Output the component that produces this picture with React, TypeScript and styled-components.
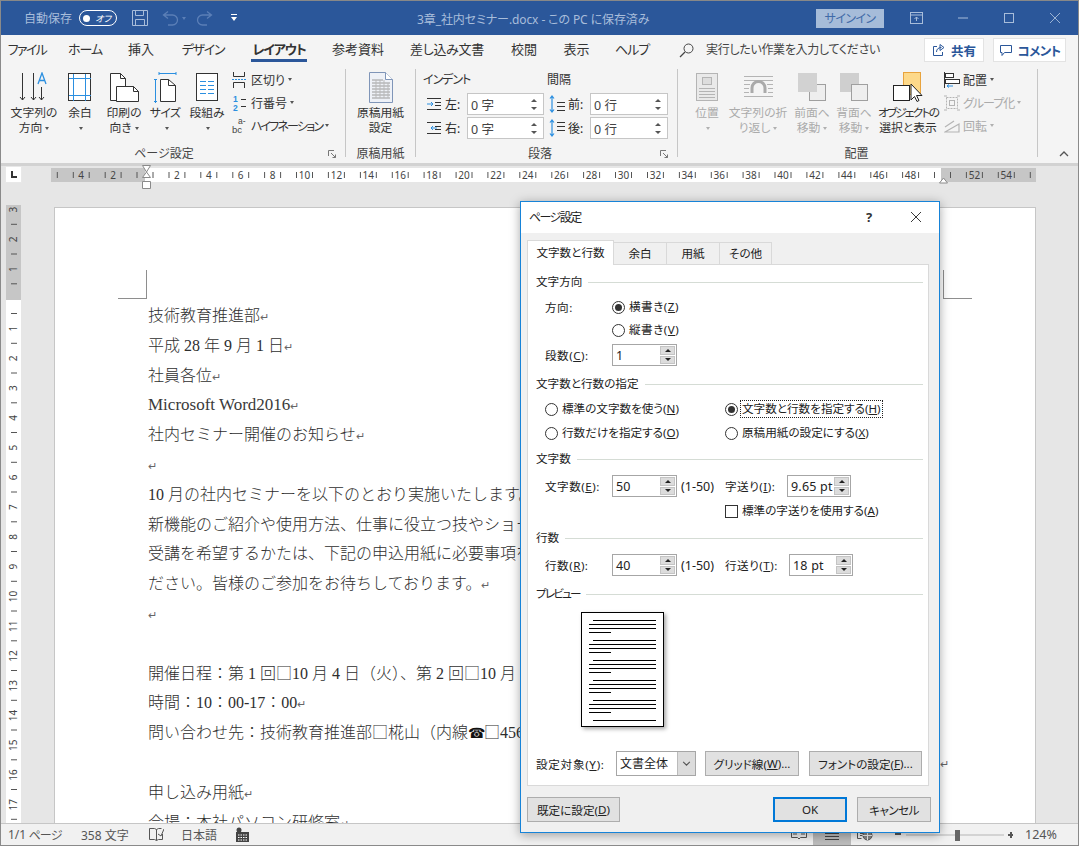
import React from 'react';
import styled, { createGlobalStyle } from 'styled-components';

const Global = createGlobalStyle`
  html, body { margin: 0; padding: 0; background: #e6e6e6; }
  * { box-sizing: border-box; }
  body { font-family: "Noto Sans", "Noto Sans CJK JP", sans-serif; font-size: 12px; color: #262626; font-feature-settings: "palt"; }
  u { text-underline-offset: 1px; }
`;

const Root = styled.div`
  position: relative; width: 1079px; height: 846px; overflow: hidden; display: flex; flex-direction: column;
  border: 1px solid #8a8a8a; border-top-color: #888; background: #e6e6e6;
`;
const Tight = styled.span<{ $ls: number }>` letter-spacing: ${p => p.$ls}px; `;

/* ---------- title bar ---------- */
const TitleBar = styled.div`
  height: 34px; flex: none; background: #2b579a; color: #a8bdda; display: flex; align-items: center; font-size: 12px;
`;
const AutoSave = styled.span` margin-left: 23px; width: 55px; `;
const Toggle = styled.span`
  width: 38px; height: 16px; border: 1.5px solid #fff; border-radius: 8px; display: flex; align-items: center; justify-content: space-between; padding: 0 5px 0 3px;
  color: #fff; font-size: 9px; font-style: italic;
  i { width: 7px; height: 7px; border-radius: 50%; background: #fff; }
`;
const QatIcon = styled.span<{ $ml: number }>` display: flex; align-items: center; margin-left: ${p => p.$ml}px; `;
const QatCaret = styled.i`
  width: 0; height: 0; border: 2.5px solid transparent; border-top: 3px solid #5b7fb7; border-bottom: 0; margin-left: 3px;
`;
const DocTitle = styled.span` position: absolute; left: 416px; top: 9px; font-size: 12px; white-space: nowrap; letter-spacing: -.1px; `;
const TitleRight = styled.div` margin-left: auto; display: flex; align-items: center; height: 100%; `;
const SignIn = styled.span`
  width: 68px; height: 19px; background: #a6bcd9; color: #3f6aa8; display: flex; align-items: center; justify-content: center; font-size: 12px; margin-right: 26px; letter-spacing: -.6px;
`;
const WinBtn = styled.span<{ $w: number; $mr?: number }>` width: ${p => p.$w}px; display: flex; justify-content: center; margin-right: ${p => p.$mr ?? 0}px; `;

/* ---------- ribbon tabs ---------- */
const TabRow = styled.div`
  height: 30px; flex: none; background: #f4f4f4; display: flex; align-items: flex-start; font-size: 13px; color: #333;
`;
const RibbonTab = styled.span<{ $w: number }>`
  width: ${p => p.$w}px; display: flex; justify-content: center; padding-top: 5px; flex: none;
`;
const TabText = styled.span<{ $active?: boolean; $ls: number }>`
  line-height: 19px; white-space: nowrap; padding: 0 1px;
  letter-spacing: ${p => p.$ls}px;
  font-weight: ${p => (p.$active ? 700 : 400)};
  border-bottom: 3px solid ${p => (p.$active ? '#2b579a' : 'transparent')};
`;
const SearchBox = styled.span` display: flex; align-items: center; gap: 12px; margin: 5px 0 0 15px; line-height: 20px; color: #444; white-space: nowrap; width: 245px; font-size: 12px; letter-spacing: -.3px; `;
const HeadBtn = styled.span<{ $w: number }>`
  width: ${p => p.$w}px; height: 24px; margin: 3px 0 0 0; background: #fff; border: 1px solid #e3e3e3; color: #2b579a; font-weight: 700; display: flex; align-items: center; justify-content: center; gap: 5px; flex: none; font-size: 12.5px;
`;
const HeadGap = styled.span` width: 9px; flex: none; `;

/* ---------- ribbon ---------- */
const Ribbon = styled.div` height: 98px; flex: none; background: #f4f4f4; display: flex; font-size: 12px; `;
const Group = styled.div<{ $w: number; $pl?: number }>`
  width: ${p => p.$w}px; flex: none; display: flex; flex-direction: column; padding-left: ${p => p.$pl ?? 0}px;
`;
const GroupBody = styled.div` flex: 1; display: flex; padding-top: 5px; min-height: 0; `;
const GroupFoot = styled.div<{ $plain?: boolean }>`
  height: 18px; display: grid; grid-template-columns: ${p => (p.$plain ? '1fr' : '1fr 12px')}; align-items: center; text-align: center; color: #444; line-height: 16px; padding-right: ${p => (p.$plain ? 0 : 5)}px;
`;
const FootLabel = styled.span<{ $pr?: number }>` padding-right: ${p => p.$pr ?? 0}px; white-space: nowrap; `;
const Launcher = styled.span` display: flex; `;
const GroupSep = styled.div` width: 1px; flex: none; background: #c6c6c6; margin: 4px 0 6px; `;
const LargeBtn = styled.div<{ $w: number; $off?: boolean }>`
  width: ${p => p.$w}px; flex: none; display: flex; flex-direction: column; align-items: center; color: ${p => (p.$off ? '#ababab' : '#333')};
`;
const LargeIcon = styled.div` height: 34px; display: flex; align-items: center; justify-content: center; `;
const LargeLabel = styled.div` margin-top: 1px; line-height: 15px; text-align: center; white-space: nowrap; font-size: 11.8px; `;
const Caret = styled.i<{ $off?: boolean }>`
  display: inline-block; width: 0; height: 0; border: 2.5px solid transparent; border-top: 3px solid ${p => (p.$off ? '#b0b0b0' : '#555')}; border-bottom: 0; vertical-align: middle; margin-left: 3px;
`;
const SmallStack = styled.div` display: flex; flex-direction: column; margin-top: -2px; `;
const SmallRow = styled.div<{ $off?: boolean }>`
  height: 23px; display: flex; align-items: center; white-space: nowrap; color: ${p => (p.$off ? '#ababab' : '#333')};
`;
const SmallIcon = styled.span` width: 19px; display: flex; `;
const ParaCol = styled.div<{ $w: number }>` width: ${p => p.$w}px; flex: none; display: flex; flex-direction: column; `;
const ParaHead = styled.div` height: 20px; line-height: 20px; color: #333; `;
const ParaRow = styled.div<{ $ml: number; $mt: number }>` display: flex; align-items: center; height: 22px; margin-top: ${p => p.$mt}px; padding-left: ${p => p.$ml}px; `;
const ParaIcon = styled.span<{ $w: number }>` width: ${p => p.$w}px; display: flex; flex: none; `;
const ParaLabel = styled.span` width: 22px; flex: none; `;
const RibbonInput = styled.div<{ $w: number }>`
  width: ${p => p.$w}px; height: 22px; border: 1px solid #c6c6c6; background: #fff; display: flex; align-items: center; justify-content: space-between; padding: 0 6px 0 3px; color: #444; font-size: 12.5px;
`;
const RibbonSpin = styled.span`
  display: flex; flex-direction: column; gap: 5px;
  i { width: 0; height: 0; border: 3px solid transparent; }
  i:first-child { border-bottom: 3px solid #555; border-top: 0; }
  i:last-child { border-top: 3px solid #555; border-bottom: 0; }
`;
const CollapseCell = styled.div` flex: 1; display: flex; align-items: flex-end; justify-content: flex-end; padding: 0 9px 6px 0; `;

/* ---------- ruler ---------- */
const RulerRow = styled.div`
  height: 42px; flex: none; background: #e6e6e6; border-top: 3px solid #d2d2d2; display: flex; align-items: flex-start; padding-left: 4px;
`;
const LButton = styled.div`
  width: 17px; height: 17px; background: #fff; border: 1px solid #e8e8e8; display: flex; align-items: center; justify-content: center; flex: none;
`;
const HRuler = styled.svg` margin: -2px 0 0 29px; flex: none; display: block; `;

/* ---------- document ---------- */
const Work = styled.div` flex: 1; min-height: 0; display: flex; `;
const VRulerCol = styled.div` width: 53px; flex: none; padding-left: 5px; `;
const VRuler = styled.svg` display: block; `;
const Page = styled.div`
  position: relative; width: 982px; margin-top: 2px; flex: none; background: #fff; border: 1px solid #c6c6c6; border-bottom: 0; overflow: hidden;
  padding: 93px 0 0 93px; font-family: "Liberation Serif", "Noto Sans CJK JP", serif; font-size: 16px; color: #2e2e2e; font-weight: 300; font-feature-settings: normal;
`;
const CropMark = styled.div<{ $side: 'l' | 'r' }>`
  position: absolute; top: 62px; width: 29px; height: 29px; border-bottom: 1px solid #8e8e8e;
  ${p => (p.$side === 'l' ? 'left: 63px; border-right: 1px solid #8e8e8e;' : 'left: 888px; border-left: 1px solid #8e8e8e;')}
`;
const DocLine = styled.div<{ $indent?: number }>`
  height: 29.8px; line-height: 29.8px; white-space: nowrap; padding-left: ${p => p.$indent ?? 0}px;
`;
const Ret = styled.span` font-family: "DejaVu Sans", sans-serif; font-size: 11px; color: #666; `;
const Tel = styled.span` display: inline-block; width: 16px; text-align: center; font-family: "DejaVu Sans", sans-serif; font-size: 14px; line-height: 16px; color: #111; `;
const Sq = styled.span` display: inline-block; width: 16px; text-align: center; font-family: "Noto Sans CJK JP", sans-serif; line-height: 16px; `;
const LatinRun = styled.span` font-size: 17px; color: #3a3a3a; `;

/* ---------- status bar ---------- */
const StatusBar = styled.div`
  height: 22px; flex: none; background: #f1f1f1; border-top: 1px solid #c6c6c6; display: flex; align-items: center; color: #555; font-size: 12px; position: relative; z-index: 1;
`;
const StatusCell = styled.span<{ $w: number }>` width: ${p => p.$w}px; flex: none; display: flex; align-items: center; white-space: nowrap; `;
const ViewBtn = styled.span<{ $w: number; $on?: boolean }>`
  width: ${p => p.$w}px; height: 100%; flex: none; display: flex; align-items: center; justify-content: center; background: ${p => (p.$on ? '#bcbcbc' : 'transparent')};
`;
const Zoom = styled.span` margin-left: 17px; display: flex; `;
const Percent = styled.span` margin-left: 12px; color: #555; font-size: 12.5px; `;

/* ---------- dialog ---------- */
const Dialog = styled.div`
  position: absolute; left: 519px; top: 200px; width: 420px; height: 632px; background: #f0f0f0; border: 1px solid #1683d8; box-shadow: 0 2px 10px rgba(0,0,0,.35); display: flex; flex-direction: column; z-index: 5; color: #222;
`;
const DlgTitle = styled.div` height: 30px; margin-bottom: 1px; flex: none; background: #fff; display: flex; align-items: center; padding-left: 8px; font-size: 12px; box-shadow: 0 1px 0 #fff; `;
const DlgHelp = styled.span` margin-left: auto; font-weight: 700; font-size: 13px; width: 45px; color: #333; `;
const DlgClose = styled.span` display: flex; margin-right: 18px; `;
const DlgBody = styled.div` flex: 1; padding: 7px 0 0 6px; display: flex; flex-direction: column; font-size: 11.6px; `;
const TabStrip = styled.div` height: 25px; flex: none; display: flex; align-items: flex-end; position: relative; z-index: 1; margin-bottom: -1px; `;
const DlgTab = styled.div<{ $w: number; $active?: boolean }>`
  width: ${p => p.$w}px; height: ${p => (p.$active ? 25 : 23)}px; display: flex; align-items: center; justify-content: center; flex: none; padding-bottom: 2px;
  background: ${p => (p.$active ? '#fff' : '#f0f0f0')}; border: 1px solid #d9d9d9; border-bottom: ${p => (p.$active ? 0 : 1)}px solid #d9d9d9; margin-left: ${p => (p.$active ? 0 : -1)}px;
`;
const Panel = styled.div`
  width: 402px; height: 522px; flex: none; background: #fff; border: 1px solid #d9d9d9; padding: 9px 5px 0 8px; display: flex; flex-direction: column;
`;
const SectionHead = styled.div<{ $mt?: number }>`
  height: 16px; line-height: 16px; display: flex; align-items: center; gap: 6px; white-space: nowrap; margin-top: ${p => p.$mt ?? 0}px;
  &::after { content: ''; flex: 1; height: 1px; background: #d5dcd5; }
`;
const FieldRow = styled.div<{ $mt: number }>` display: flex; align-items: center; min-height: 20px; padding-left: 9px; margin-top: ${p => p.$mt}px; white-space: nowrap; `;
const FieldLabel = styled.span<{ $w: number }>` width: ${p => p.$w}px; flex: none; letter-spacing: .5px; `;
const Radio = styled.span<{ $on?: boolean }>`
  width: 13px; height: 13px; border-radius: 50%; border: 1px solid #333; background: #fff; flex: none; display: flex; align-items: center; justify-content: center;
  &::after { content: ''; width: 7px; height: 7px; border-radius: 50%; background: ${p => (p.$on ? '#333' : 'transparent')}; }
`;
const CheckBox = styled.span` width: 13px; height: 13px; border: 1px solid #333; background: #fff; flex: none; `;
const Opt = styled.span<{ $w?: number }>`
  display: flex; align-items: center; flex: none; ${p => (p.$w ? `width: ${p.$w}px;` : '')}
`;
const OptText = styled.span<{ $focus?: boolean }>`
  margin-left: 3px; padding: 0 1px; line-height: 16px; outline: ${p => (p.$focus ? '1px dotted #222' : 'none')};
`;
const Spin = styled.div<{ $w: number }>`
  width: ${p => p.$w}px; height: 22px; flex: none; border: 1px solid #a6a6a6; background: #fff; display: flex; align-items: center; justify-content: space-between; padding: 1px 1px 1px 3px; font-size: 12.5px; letter-spacing: .2px;
`;
const SpinBtns = styled.span`
  width: 15px; height: 100%; display: flex; flex-direction: column; gap: 1px; flex: none;
  b { flex: 1; background: #dcdcdc; border: 1px solid #c4c4c4; display: flex; align-items: center; justify-content: center; }
  i { width: 0; height: 0; border: 3px solid transparent; }
  b:first-child i { border-bottom: 3px solid #222; border-top: 0; }
  b:last-child i { border-top: 3px solid #222; border-bottom: 0; }
`;
const Range = styled.span` width: 44px; flex: none; margin-left: 4px; font-size: 12.5px; `;
const PreviewPage = styled.div`
  width: 83px; height: 115px; margin: 10px 0 0 45px; border: 1px solid #000; background: #fff; box-shadow: 2px 2px 4px rgba(0,0,0,.35); flex: none;
  svg { display: block; }
`;
const BottomRow = styled.div` margin-top: 24px; display: flex; align-items: center; `;
const TargetLabel = styled.span` width: 80px; flex: none; white-space: nowrap; letter-spacing: .7px; `;
const SelectBox = styled.div`
  width: 80px; height: 25px; border: 1px solid #a6a6a6; background: #fff; display: flex; align-items: stretch; padding-left: 3px; flex: none; font-size: 12px;
  span { flex: 1; line-height: 23px; }
  i { width: 18px; background: #dcdcdc; border-left: 1px solid #bbb; display: flex; align-items: center; justify-content: center; }
`;
const DlgButton = styled.div<{ $w: number; $ml?: number; $def?: boolean }>`
  width: ${p => p.$w}px; height: 25px; flex: none; margin-left: ${p => p.$ml ?? 0}px; background: #e1e1e1; border: ${p => (p.$def ? '2px solid #0078d7' : '1px solid #adadad')}; display: flex; align-items: center; justify-content: center; white-space: nowrap;
`;
const DlgFoot = styled.div` display: flex; margin-top: 11px; `;

/* ---------- icons ---------- */
const K = '#333';
const B = '#2b8fe0';
const G = '#b4b4b4';
const TextDirIcon = () => (
  <svg width="30" height="30" viewBox="0 0 30 30" fill="none" stroke={K}>
    <path d="M3.5 1v27M1 25l2.500 3 2.500-3M14.500 1v27M12 25l2.500 3 2.500-3M22.500 15v13M20 25l2.500 3 2.500-3" />
    <path d="M19 12l4-11 4 11M20.500 8.500h5" stroke={B} strokeWidth="1.3" />
  </svg>
);
const MarginIcon = () => (
  <svg width="24" height="29" viewBox="0 0 24 29" fill="none">
    <rect x=".5" y=".5" width="22" height="27" fill="#fff" stroke={K} />
    <path d="M5.500 1v27M17.500 1v27M1 5.500h22M1 22.500h22" stroke={B} />
  </svg>
);
const OrientIcon = () => (
  <svg width="29" height="29" viewBox="0 0 29 29" fill="#fff" stroke={K}>
    <path d="M.5.500h10l5 5v22h-15z" />
    <path d="M10.500.500v5h5" fill="none" />
    <path d="M6.500 13.500h17l5 5v10h-22z" />
    <path d="M23.500 13.500v5h5" fill="none" />
  </svg>
);
const SizeIcon = () => (
  <svg width="23" height="31" viewBox="0 0 23 31" fill="none">
    <path d="M1.500 7v24M0 7.500h3M0 29.500h3M5 1.500h17M5 0v3M22 0v3" stroke={B} />
    <path d="M6.500 7.500h8l7 6v16h-15z" fill="#fff" stroke={K} />
    <path d="M14.500 7.500v6h7" stroke={K} />
  </svg>
);
const ColumnsIcon = () => (
  <svg width="23" height="29" viewBox="0 0 23 29" fill="none">
    <rect x=".5" y=".5" width="21" height="27" fill="#fff" stroke={K} />
    <path d="M4 8.500h6M12 8.500h6M4 12.500h6M12 12.500h6M4 16.500h6M12 16.500h6M4 20.500h6M12 20.500h6" stroke={B} />
  </svg>
);
const BreakIcon = () => (
  <svg width="14" height="16" viewBox="0 0 14 16" fill="none" stroke={K}>
    <path d="M1.500 0v4.500h11V0M1.500 16v-5.500h11V16" />
    <path d="M0 7.500h14" stroke={B} strokeDasharray="2 1" />
  </svg>
);
const LineNoIcon = () => (
  <svg width="14" height="16" viewBox="0 0 14 16" fill="none">
    <path d="M9 4.500h5M9 11.500h5" stroke={K} />
    <text x="1" y="7" fontSize="8.500" fontWeight="700" fill={B} stroke="none" fontFamily="Liberation Sans">1</text>
    <text x="1" y="15.500" fontSize="8.500" fontWeight="700" fill={B} stroke="none" fontFamily="Liberation Sans">2</text>
  </svg>
);
const HyphenIcon = () => (
  <svg width="16" height="17" viewBox="0 0 16 17">
    <text x="6" y="7" fontSize="8.500" fill="#444" fontFamily="Liberation Sans">a-</text>
    <text x="0" y="16" fontSize="9.500" fill="#444" fontFamily="Liberation Sans">bc</text>
  </svg>
);
const GenkoIcon = () => (
  <svg width="24" height="31" viewBox="0 0 24 31" fill="none">
    <path d="M.5.500h16l7 7v23H.5z" fill="#eef1f7" stroke="#7f95b8" />
    <path d="M16.500.500v7h7" fill="#fff" stroke="#7f95b8" />
    <path d="M3 8h11M3 11h18M3 14h18M3 17h18M3 20h18M3 23h18M3 26h18" stroke="#9a9a9a" />
    <path d="M7 8v18M11 8v18M15 8v18M19 11v15" stroke="#b9b9b9" />
  </svg>
);
const IndentIcon = ({ dir }: { dir: 'l' | 'r' }) => (
  <svg width="14" height="14" viewBox="0 0 14 14" fill="none" stroke={K}>
    <path d="M0 1.500h14M0 12.500h14M8 5.500h6M8 8.500h6" />
    <path d={dir === 'l' ? 'M0 7h6M4 5l2 2-2 2' : 'M1 7h6M3 5L1 7l2 2'} stroke={B} transform={dir === 'r' ? 'translate(3 0)' : ''} />
  </svg>
);
const SpaceIcon = ({ pos }: { pos: 'b' | 'a' }) => (
  <svg width="16" height="18" viewBox="0 0 16 18" fill="none">
    <path d="M3 1v16M1 3.500L3 1l2 2.500M1 14.500L3 17l2-2.500" stroke={B} strokeWidth="1.200" />
    <path d={pos === 'b' ? 'M8 7.500h8M8 11.500h8M8 15.500h8' : 'M8 3.500h8M8 7.500h8M8 11.500h8'} stroke={K} />
  </svg>
);
const PositionIcon = () => (
  <svg width="22" height="28" viewBox="0 0 22 28" fill="#e9e9e9" stroke={G}>
    <rect x=".5" y=".5" width="21" height="27" />
    <rect x="6.500" y="4.500" width="9" height="7" fill="#ddd" />
    <path d="M3 15.500h16M3 18.500h16M3 21.500h16M3 24.500h16" fill="none" />
  </svg>
);
const WrapIcon = () => (
  <svg width="29" height="22" viewBox="0 0 29 22" fill="none" stroke={G}>
    <path d="M0 .5h29M0 4.500h29M0 8.500h6M23 8.500h6M0 12.500h5M24 12.500h5M0 16.500h5M24 16.500h5M0 20.500h29" />
    <path d="M8 17v-5a6.500 6.500 0 0 1 13 0v5" strokeWidth="3" stroke="#aaa" />
  </svg>
);
const FrontIcon = ({ back }: { back?: boolean }) => (
  <svg width="28" height="28" viewBox="0 0 28 28" fill="none">
    {back ? (
      <>
        <rect x="0" y="0" width="19" height="19" fill="#cfcfcf" />
        <rect x="11.500" y="11.500" width="16" height="16" fill="#eee" stroke="#9f9f9f" />
      </>
    ) : (
      <>
        <rect x="11.500" y="11.500" width="16" height="16" fill="#eee" stroke="#9f9f9f" />
        <rect x="0" y="0" width="19" height="19" fill="#d2d2d2" />
      </>
    )}
  </svg>
);
const SelectionIcon = () => (
  <svg width="30" height="30" viewBox="0 0 30 30" fill="none">
    <rect x="10.500" y=".5" width="17" height="22" fill="#fdd98a" stroke="#e8a33d" />
    <rect x=".5" y="13.500" width="16" height="15" fill="#fff" stroke="#222" />
    <path d="M18 12v16l3.500-3.500 2.500 5 2-1-2.500-5H29z" fill="#fff" stroke="#222" />
  </svg>
);
const AlignIcon = () => (
  <svg width="16" height="16" viewBox="0 0 16 16" fill="none">
    <path d="M.5 0v16" stroke={K} />
    <rect x="1.500" y="1.500" width="8" height="4" stroke={K} fill="#fff" />
    <rect x="1.500" y="7.500" width="14" height="4" stroke={K} fill="#fff" />
    <path d="M3 14h6M3 14l2-1.500M3 14l2 1.500" stroke={B} />
  </svg>
);
const GroupIcon = () => (
  <svg width="16" height="16" viewBox="0 0 16 16" fill="none" stroke={G}>
    <rect x="2.500" y="2.500" width="11" height="11" strokeDasharray="2 1" />
    <rect x="5.500" y="5.500" width="5" height="5" />
    <path d="M0 1h3M0 15h3M13 1h3M13 15h3" />
  </svg>
);
const RotateIcon = () => (
  <svg width="16" height="14" viewBox="0 0 16 14" fill="none" stroke={G}>
    <path d="M1 13L15 5v8zM1 8l9-6" strokeWidth="1.200" />
  </svg>
);
const LaunchIcon = () => (
  <svg width="8" height="8" viewBox="0 0 8 8" fill="none" stroke="#777">
    <path d="M.5 6V.5H6M3 3l4.500 4.500M7.500 4.500v3h-3" />
  </svg>
);
const Chevron = ({ up, color = '#333', w = 10, h = 6 }: { up?: boolean; color?: string; w?: number; h?: number }) => (
  <svg width={w} height={h} viewBox="0 0 10 6" fill="none" stroke={color} strokeWidth="1.300">
    <path d={up ? 'M1 5l4-4 4 4' : 'M1 1l4 4 4-4'} />
  </svg>
);

const D = '#a8bdda';
const SaveIcon = () => (
  <svg width="16" height="16" viewBox="0 0 16 16" fill="none" stroke={D}>
    <path d="M.5.500h15v15H.5zM3.500.500v5h8v-5M3.500 15.500v-6h9v6" />
  </svg>
);
const UndoIcon = ({ flip }: { flip?: boolean }) => (
  <svg width="17" height="16" viewBox="0 0 17 16" fill="none" stroke="#5b7fb7" strokeWidth="1.300" style={flip ? { transform: 'scaleX(-1)' } : undefined}>
    <path d="M6 1.500L1.500 5 6 8.500M1.500 5h9a5 5 0 0 1 0 10H6" />
  </svg>
);
const PinIcon = () => (
  <svg width="6" height="8" viewBox="0 0 6 8" fill="#fff"><rect x="0" y="0" width="6" height="1" /><path d="M0 3h6L3 7z" /></svg>
);
const RibbonOptIcon = () => (
  <svg width="13" height="12" viewBox="0 0 13 12" fill="none" stroke={D}><rect x=".5" y=".5" width="12" height="11" /><path d="M.5 3h12M4.500 7l2-2 2 2M6.500 5v4" /></svg>
);
const MinIcon = () => <svg width="10" height="2" viewBox="0 0 10 2"><path d="M0 1h10" stroke={D} /></svg>;
const MaxIcon = () => <svg width="10" height="10" viewBox="0 0 10 10" fill="none"><rect x=".5" y=".5" width="9" height="9" stroke={D} /></svg>;
const CloseIcon = ({ c = D, s = 10 }: { c?: string; s?: number }) => (
  <svg width={s} height={s} viewBox="0 0 10 10" fill="none" stroke={c} strokeWidth=".9"><path d="M0 0l10 10M10 0L0 10" /></svg>
);
const SearchIcon = () => (
  <svg width="15" height="15" viewBox="0 0 15 15" fill="none" stroke="#444"><circle cx="9.500" cy="5.500" r="4.500" /><path d="M6 9l-5 5" strokeWidth="1.300" /></svg>
);
const ShareIcon = () => (
  <svg width="14" height="14" viewBox="0 0 14 14" fill="none" stroke="#2b579a"><path d="M5 3.500H1.500v9h9V9" /><path d="M4.500 9c0-3 2-4.500 5-4.500M8 1.500l4 3-4 3z" /></svg>
);
const CommentIcon = () => (
  <svg width="14" height="13" viewBox="0 0 14 13" fill="none" stroke="#2b579a"><path d="M1.500 1.500h11v7h-7L3 11.500v-3H1.500z" /></svg>
);
const BookIcon = () => (
  <svg width="15" height="15" viewBox="0 0 15 15" fill="none" stroke="#555"><path d="M.5 1.500h5l2 1 0 11-2-1h-5zM7.500 2.500l2-1h3M7.500 13.500l2-1h4V7" /><path d="M9 7l3 2 3-7" /></svg>
);
const MacroIcon = () => (
  <svg width="13" height="15" viewBox="0 0 13 15" fill="#444"><circle cx="3" cy="3" r="2.500" /><rect x="0" y="5" width="13" height="10" /><path d="M2 8h9M2 10.500h9M2 13h9" stroke="#fff" strokeDasharray="1.500 1" /></svg>
);
const ReadIcon = () => (
  <svg width="16" height="11" viewBox="0 0 16 11" fill="none" stroke="#555"><path d="M.5.500h6l1.500 1 1.500-1h6v8h-6L8 10 6.500 8.500h-6zM2 3h4M2 5h4M10 3h4M10 5h4" /></svg>
);
const PrintIcon = () => (
  <svg width="14" height="10" viewBox="0 0 14 10" fill="none" stroke="#444"><path d="M0 .5h14M0 3.500h14M0 6.500h14M0 9.500h14" /></svg>
);
const WebIcon = () => (
  <svg width="16" height="12" viewBox="0 0 16 12" fill="none" stroke="#555"><path d="M.5 1.500h7M.5 1.500v8h4M3 4.500h3M3 6.500h2" /><circle cx="10.500" cy="6.500" r="4.500" fill="#888" stroke="#555" /><path d="M6 6.500h9M10.500 2v9" stroke="#f1f1f1" /></svg>
);
const ZoomBar = () => (
  <svg width="118" height="14" viewBox="0 0 118 14">
    <path d="M0 6h6" stroke="#555" strokeWidth="2" />
    <path d="M11 7h98" stroke="#b5b5b5" />
    <rect x="60" y="2" width="5" height="11" fill="#666" />
    <path d="M113 7h6M116 4v6" stroke="#555" strokeWidth="2" />
  </svg>
);

/* ---------- rulers ---------- */
const RW = 985;
const RX = (n: number) => 94 + 15.95 * n; // ruler-unit to svg x (ruler svg starts at page x 51)
const HNums = [-4, -2, 2, 4, 6, 8, 10, 12, 14, 16, 18, 20, 22, 24, 26, 28, 30, 32, 34, 36, 38, 40, 42, 44, 46, 48, 52, 54];
const HTicks = Array.from({ length: 62 }, (_, i) => i - 6).map(n => RX(n) + 8).filter(x => x > 2 && x < 983);

const HorizontalRuler = () => (
  <HRuler width={RW} height={26} viewBox={`0 0 ${RW} 26`}>
    <rect x="0" y="4" width={RW} height="14" fill="#c6c6c6" />
    <rect x="94" y="4" width="796" height="14" fill="#fff" />
    {HTicks.map(x => <path key={x} d={`M${x.toFixed(1)} 8v6`} stroke="#555" />)}
    {HNums.map(n => (
      <text key={n} x={RX(n)} y="14.500" textAnchor="middle" fontSize="10" fill="#444" fontFamily="Noto Sans">{Math.abs(n)}</text>
    ))}
    <path d="M91.500 1.500h8L95.500 8zM95.500 8l4 5.500h-8zM91.500 17.500h8v7h-8z" fill="#fff" stroke="#8a8a8a" />
    <path d="M888.500 19l4-5 4 5z" fill="#fff" stroke="#8a8a8a" />
  </HRuler>
);

const VY = (n: number) => 94 + 29.75 * n;
const VNums = [-3, -2, -1, 1, 2, 3, 4, 5, 6, 7, 8, 9, 10, 11, 12, 13, 14, 15, 16, 17];
const VTicks = Array.from({ length: 22 }, (_, i) => i - 4).map(n => VY(n) + 14.5).filter(y => y > 2);

const VerticalRuler = () => (
  <VRuler width="15" height="618" viewBox="0 0 15 618">
    <rect width="15" height="618" fill="#fff" />
    <rect width="15" height="95" fill="#c6c6c6" />
    {VTicks.map(y => <path key={y} d={`M5 ${y.toFixed(1)}h6`} stroke="#555" />)}
    {VNums.map(n => (
      <text key={n} x="0" y="0" transform={`translate(11 ${VY(n)}) rotate(-90)`} textAnchor="middle" fontSize="10" fill="#444" fontFamily="Noto Sans">{Math.abs(n)}</text>
    ))}
  </VRuler>
);

/* ---------- data ---------- */
const TABS: [string, number, number][] = [
  ['ファイル', 52, -1.6], ['ホーム', 64, -1], ['挿入', 48, 0], ['デザイン', 76, -1.2], ['レイアウト', 76, -1.2], ['参考資料', 82, 0], ['差し込み文書', 96, -.3], ['校閲', 58, 0], ['表示', 47, 0], ['ヘルプ', 64, -1],
];

const R = () => <Ret>↵</Ret>;

const PreviewLines = () => {
  const paras = [0, 20, 40, 60, 80];
  return (
    <svg width="81" height="113" viewBox="0 0 81 113" stroke="#000">
      {paras.map(y => (
        <g key={y}>
          <path d={`M11 ${7.5 + y}h63`} />
          <path d={`M7 ${11.5 + y}h67`} />
          <path d={`M7 ${15.5 + y}h67`} />
          <path d={`M7 ${19.5 + y}h22`} />
        </g>
      ))}
      <path d="M11 107.500h63" />
    </svg>
  );
};

const SpinField = ({ w, v }: { w: number; v: string }) => (
  <Spin $w={w}>
    <span>{v}</span>
    <SpinBtns><b><i /></b><b><i /></b></SpinBtns>
  </Spin>
);

const RInput = ({ w, v }: { w: number; v: string }) => (
  <RibbonInput $w={w}>
    <span>{v}</span>
    <RibbonSpin><i /><i /></RibbonSpin>
  </RibbonInput>
);

export default function App() {
  return (
    <Root>
      <Global />
      <TitleBar>
        <AutoSave>自動保存</AutoSave>
        <Toggle><i />オフ</Toggle>
        <QatIcon $ml={15}><SaveIcon /></QatIcon>
        <QatIcon $ml={14}><UndoIcon /><QatCaret /></QatIcon>
        <QatIcon $ml={10}><UndoIcon flip /></QatIcon>
        <QatIcon $ml={18}><PinIcon /></QatIcon>
        <DocTitle>3章_社内セミナー.docx - この PC に保存済み</DocTitle>
        <TitleRight>
          <SignIn>サインイン</SignIn>
          <WinBtn $w={13} $mr={17}><RibbonOptIcon /></WinBtn>
          <WinBtn $w={46}><MinIcon /></WinBtn>
          <WinBtn $w={46}><MaxIcon /></WinBtn>
          <WinBtn $w={46}><CloseIcon /></WinBtn>
        </TitleRight>
      </TitleBar>

      <TabRow>
        {TABS.map(([t, w, ls]) => (
          <RibbonTab key={t} $w={w}><TabText $ls={ls} $active={t === 'レイアウト'}>{t}</TabText></RibbonTab>
        ))}
        <SearchBox><SearchIcon />実行したい作業を入力してください</SearchBox>
        <HeadBtn $w={60}><ShareIcon />共有</HeadBtn>
        <HeadGap />
        <HeadBtn $w={73}><CommentIcon /><Tight $ls={-.6}>コメント</Tight></HeadBtn>
      </TabRow>

      <Ribbon>
        <Group $w={344} $pl={7}>
          <GroupBody>
            <LargeBtn $w={52}><LargeIcon><TextDirIcon /></LargeIcon><LargeLabel>文字列の<br />方向<Caret /></LargeLabel></LargeBtn>
            <LargeBtn $w={40}><LargeIcon><MarginIcon /></LargeIcon><LargeLabel>余白<br /><Caret /></LargeLabel></LargeBtn>
            <LargeBtn $w={48}><LargeIcon><OrientIcon /></LargeIcon><LargeLabel>印刷の<br />向き<Caret /></LargeLabel></LargeBtn>
            <LargeBtn $w={34}><LargeIcon><SizeIcon /></LargeIcon><LargeLabel><Tight $ls={-.6}>サイズ</Tight><br /><Caret /></LargeLabel></LargeBtn>
            <LargeBtn $w={50}><LargeIcon><ColumnsIcon /></LargeIcon><LargeLabel>段組み<br /><Caret /></LargeLabel></LargeBtn>
            <SmallStack>
              <SmallRow><SmallIcon><BreakIcon /></SmallIcon>区切り<Caret /></SmallRow>
              <SmallRow><SmallIcon><LineNoIcon /></SmallIcon>行番号<Caret /></SmallRow>
              <SmallRow><SmallIcon><HyphenIcon /></SmallIcon><Tight $ls={-1.8}>ハイフネーション</Tight><Caret /></SmallRow>
            </SmallStack>
          </GroupBody>
          <GroupFoot><FootLabel $pr={8}>ページ設定</FootLabel><Launcher><LaunchIcon /></Launcher></GroupFoot>
        </Group>
        <GroupSep />
        <Group $w={69}>
          <GroupBody>
            <LargeBtn $w={69}><LargeIcon><GenkoIcon /></LargeIcon><LargeLabel>原稿用紙<br />設定</LargeLabel></LargeBtn>
          </GroupBody>
          <GroupFoot $plain><FootLabel>原稿用紙</FootLabel></GroupFoot>
        </Group>
        <GroupSep />
        <Group $w={261} $pl={7}>
          <GroupBody>
            <ParaCol $w={124}>
              <ParaHead><Tight $ls={-1}>インデント</Tight></ParaHead>
              <ParaRow $ml={4} $mt={3}><ParaIcon $w={18}><IndentIcon dir="l" /></ParaIcon><ParaLabel>左:</ParaLabel><RInput w={77} v="0 字" /></ParaRow>
              <ParaRow $ml={4} $mt={2}><ParaIcon $w={18}><IndentIcon dir="r" /></ParaIcon><ParaLabel>右:</ParaLabel><RInput w={77} v="0 字" /></ParaRow>
            </ParaCol>
            <ParaCol $w={124}>
              <ParaHead>間隔</ParaHead>
              <ParaRow $ml={2} $mt={3}><ParaIcon $w={19}><SpaceIcon pos="b" /></ParaIcon><ParaLabel>前:</ParaLabel><RInput w={78} v="0 行" /></ParaRow>
              <ParaRow $ml={2} $mt={2}><ParaIcon $w={19}><SpaceIcon pos="a" /></ParaIcon><ParaLabel>後:</ParaLabel><RInput w={78} v="0 行" /></ParaRow>
            </ParaCol>
          </GroupBody>
          <GroupFoot><FootLabel $pr={3}>段落</FootLabel><Launcher><LaunchIcon /></Launcher></GroupFoot>
        </Group>
        <GroupSep />
        <Group $w={359} $pl={8}>
          <GroupBody>
            <LargeBtn $w={42} $off><LargeIcon><PositionIcon /></LargeIcon><LargeLabel>位置<br /><Caret $off /></LargeLabel></LargeBtn>
            <LargeBtn $w={60} $off><LargeIcon><WrapIcon /></LargeIcon><LargeLabel>文字列の折<br />り返し<Caret $off /></LargeLabel></LargeBtn>
            <LargeBtn $w={48} $off><LargeIcon><FrontIcon /></LargeIcon><LargeLabel>前面へ<br />移動<Caret $off /></LargeLabel></LargeBtn>
            <LargeBtn $w={36} $off><LargeIcon><FrontIcon back /></LargeIcon><LargeLabel>背面へ<br />移動<Caret $off /></LargeLabel></LargeBtn>
            <LargeBtn $w={72}><LargeIcon><SelectionIcon /></LargeIcon><LargeLabel><Tight $ls={-1.9}>オブジェクトの</Tight><br />選択と表示</LargeLabel></LargeBtn>
            <SmallStack>
              <SmallRow><SmallIcon><AlignIcon /></SmallIcon>配置<Caret /></SmallRow>
              <SmallRow $off><SmallIcon><GroupIcon /></SmallIcon><Tight $ls={-1}>グループ化</Tight><Caret $off /></SmallRow>
              <SmallRow $off><SmallIcon><RotateIcon /></SmallIcon>回転<Caret $off /></SmallRow>
            </SmallStack>
          </GroupBody>
          <GroupFoot $plain><FootLabel $pr={10}>配置</FootLabel></GroupFoot>
        </Group>
        <GroupSep />
        <CollapseCell><Chevron up color="#555" /></CollapseCell>
      </Ribbon>

      <RulerRow>
        <LButton>
          <svg width="6" height="7" viewBox="0 0 6 7"><path d="M1 0v6h5" fill="none" stroke="#333" strokeWidth="2" /></svg>
        </LButton>
        <HorizontalRuler />
      </RulerRow>

      <Work>
        <VRulerCol><VerticalRuler /></VRulerCol>
        <Page>
          <CropMark $side="l" />
          <CropMark $side="r" />
          <DocLine>技術教育推進部<R /></DocLine>
          <DocLine>平成 28 年 9 月 1 日<R /></DocLine>
          <DocLine>社員各位<R /></DocLine>
          <DocLine><LatinRun>Microsoft Word2016</LatinRun><R /></DocLine>
          <DocLine>社内セミナー開催のお知らせ<R /></DocLine>
          <DocLine><R /></DocLine>
          <DocLine>10 月の社内セミナーを以下のとおり実施いたします。</DocLine>
          <DocLine>新機能のご紹介や使用方法、仕事に役立つ技やショー</DocLine>
          <DocLine>受講を希望するかたは、下記の申込用紙に必要事項を</DocLine>
          <DocLine>ださい。皆様のご参加をお待ちしております。<R /></DocLine>
          <DocLine><R /></DocLine>
          <DocLine />
          <DocLine>開催日程：第 1 回<Sq>□</Sq>10 月 4 日（火）、第 2 回<Sq>□</Sq>10 月</DocLine>
          <DocLine>時間：10：00-17：00<R /></DocLine>
          <DocLine>問い合わせ先：技術教育推進部<Sq>□</Sq>椛山（内線<Tel>☎</Tel><Sq>□</Sq>456</DocLine>
          <DocLine $indent={776}>に<R /></DocLine>
          <DocLine>申し込み用紙<R /></DocLine>
          <DocLine>会場：本社パソコン研修室<R /></DocLine>
        </Page>
      </Work>

      <StatusBar>
        <StatusCell $w={7} />
        <StatusCell $w={73}>1/1 <Tight $ls={-.8}>&nbsp;ページ</Tight></StatusCell>
        <StatusCell $w={68}>358 文字</StatusCell>
        <StatusCell $w={32}><BookIcon /></StatusCell>
        <StatusCell $w={55}>日本語</StatusCell>
        <StatusCell $w={549}><MacroIcon /></StatusCell>
        <ViewBtn $w={28}><ReadIcon /></ViewBtn>
        <ViewBtn $w={38} $on><PrintIcon /></ViewBtn>
        <ViewBtn $w={27}><WebIcon /></ViewBtn>
        <Zoom><ZoomBar /></Zoom>
        <Percent>124%</Percent>
      </StatusBar>

      <Dialog>
        <DlgTitle>
          <Tight $ls={-1.6}>ページ設定</Tight>
          <DlgHelp>?</DlgHelp>
          <DlgClose><CloseIcon c="#222" /></DlgClose>
        </DlgTitle>
        <DlgBody>
          <TabStrip>
            <DlgTab $w={87} $active>文字数と行数</DlgTab>
            <DlgTab $w={54}>余白</DlgTab>
            <DlgTab $w={54}>用紙</DlgTab>
            <DlgTab $w={53}>その他</DlgTab>
          </TabStrip>
          <Panel>
            <SectionHead>文字方向</SectionHead>
            <FieldRow $mt={7}>
              <FieldLabel $w={67}>方向:</FieldLabel>
              <Opt><Radio $on /><OptText><Tight $ls={.5}>横書き(<u>Z</u>)</Tight></OptText></Opt>
            </FieldRow>
            <FieldRow $mt={3}>
              <FieldLabel $w={67} />
              <Opt><Radio /><OptText><Tight $ls={.5}>縦書き(<u>V</u>)</Tight></OptText></Opt>
            </FieldRow>
            <FieldRow $mt={4}>
              <FieldLabel $w={67}>段数(<u>C</u>):</FieldLabel>
              <SpinField w={65} v="1" />
            </FieldRow>

            <SectionHead $mt={10}>文字数と行数の指定</SectionHead>
            <FieldRow $mt={7}>
              <Opt $w={180}><Radio /><OptText>標準の文字数を使う(<u>N</u>)</OptText></Opt>
              <Opt><Radio $on /><OptText $focus>文字数と行数を指定する(<u>H</u>)</OptText></Opt>
            </FieldRow>
            <FieldRow $mt={4}>
              <Opt $w={180}><Radio /><OptText>行数だけを指定する(<u>O</u>)</OptText></Opt>
              <Opt><Radio /><OptText>原稿用紙の設定にする(<u>X</u>)</OptText></Opt>
            </FieldRow>

            <SectionHead $mt={8}>文字数</SectionHead>
            <FieldRow $mt={8}>
              <FieldLabel $w={67}>文字数(<u>E</u>):</FieldLabel>
              <SpinField w={65} v="50" />
              <Range>(1-50)</Range>
              <FieldLabel $w={62}>字送り(<u>I</u>):</FieldLabel>
              <SpinField w={64} v="9.65 pt" />
            </FieldRow>
            <FieldRow $mt={4}>
              <FieldLabel $w={180} />
              <Opt><CheckBox /><OptText>標準の字送りを使用する(<u>A</u>)</OptText></Opt>
            </FieldRow>

            <SectionHead $mt={9}>行数</SectionHead>
            <FieldRow $mt={8}>
              <FieldLabel $w={67}>行数(<u>R</u>):</FieldLabel>
              <SpinField w={65} v="40" />
              <Range>(1-50)</Range>
              <FieldLabel $w={64}>行送り(<u>T</u>):</FieldLabel>
              <SpinField w={64} v="18 pt" />
            </FieldRow>

            <SectionHead $mt={10}><Tight $ls={-1.8}>プレビュー</Tight></SectionHead>
            <PreviewPage><PreviewLines /></PreviewPage>

            <BottomRow>
              <TargetLabel>設定対象(<u>Y</u>):</TargetLabel>
              <SelectBox>
                <span>文書全体</span>
                <i><Chevron color="#555" w={9} h={5} /></i>
              </SelectBox>
              <DlgButton $w={94} $ml={9}>グリッド線(<u>W</u>)...</DlgButton>
              <DlgButton $w={113} $ml={10}>フォントの設定(<u>F</u>)...</DlgButton>
            </BottomRow>
          </Panel>
          <DlgFoot>
            <DlgButton $w={93}>既定に設定(<u>D</u>)</DlgButton>
            <DlgButton $w={74} $ml={153} $def>OK</DlgButton>
            <DlgButton $w={74} $ml={10}><Tight $ls={-.6}>キャンセル</Tight></DlgButton>
          </DlgFoot>
        </DlgBody>
      </Dialog>
    </Root>
  );
}
